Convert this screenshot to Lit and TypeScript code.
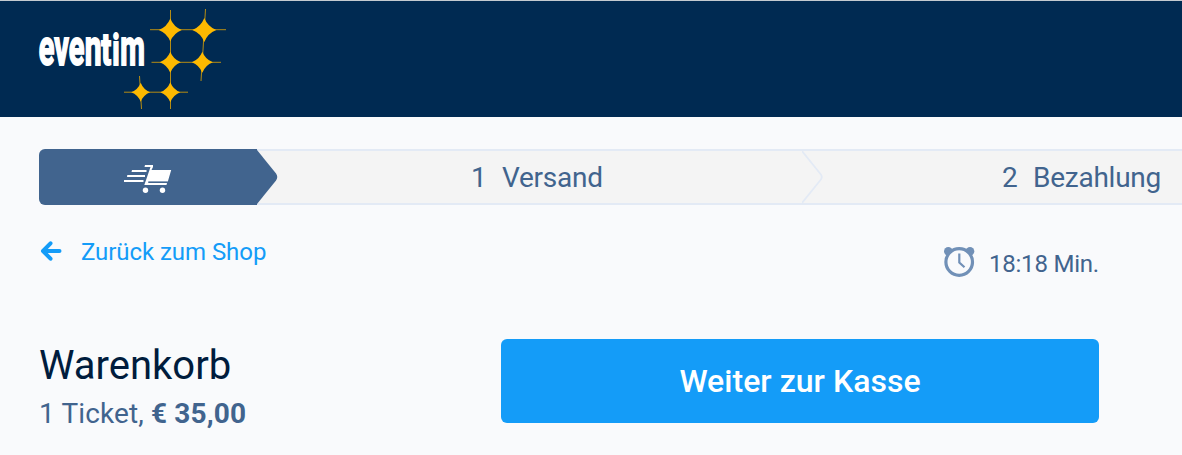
import { LitElement, html, css, svg } from "lit";
import { customElement } from "lit/decorators.js";

@customElement("brand-logo")
class BrandLogo extends LitElement {
  static styles = css`
    :host { display: block; width: 200px; height: 110px; }
    .logo { display: block; }
    .word { font-family: Roboto, sans-serif; font-weight: 700; fill: #fff; stroke: #fff; stroke-width: 1.9px; }
    .line { stroke: #b48c14; stroke-width: 1; fill: none; }
    .star { fill: #fdb900; }
  `;

  private star(x: number, y: number, r: number) {
    const k = r * 0.28;
    return svg`<path class="star" d="M${x} ${y - r}Q${x + k} ${y - k} ${x + r} ${y}Q${x + k} ${y + k} ${x} ${y + r}Q${x - k} ${y + k} ${x - r} ${y}Q${x - k} ${y - k} ${x} ${y - r}Z"/>`;
  }

  render() {
    return html`<svg class="logo" width="200" height="110" viewBox="30 1 200 110" role="img" aria-label="eventim">
      <g transform="translate(38.800 65.300) scale(.525 1)">
        <text class="word" x="0" y="0" font-size="50" textLength="87" lengthAdjust="spacingAndGlyphs">eve</text>
        <text class="word" x="87.500" y="0" font-size="50" textLength="32" lengthAdjust="spacingAndGlyphs">n</text>
        <text class="word" x="119" y="0" font-size="45" textLength="19" lengthAdjust="spacingAndGlyphs">t</text>
        <text class="word" x="140" y="0" font-size="43" textLength="14" lengthAdjust="spacingAndGlyphs">i</text>
        <text class="word" x="155" y="0" font-size="50" textLength="47" lengthAdjust="spacingAndGlyphs">m</text>
      </g>
      <path class="line" d="M150 29.7H226M151.500 62.300H221M124 92.200H188M170.500 10V109M205.500 9L203 50L201 81M139.500 76L141.500 109"/>
      ${this.star(170.3, 30, 11.5)}${this.star(204.3, 30, 12)}${this.star(170.3, 62.3, 10.5)}
      ${this.star(202.3, 62.3, 10.5)}${this.star(140.7, 92.3, 9.5)}${this.star(170.3, 92.3, 10)}
    </svg>`;
  }
}

@customElement("checkout-steps")
class CheckoutSteps extends LitElement {
  static styles = css`
    :host { display: block; font: 400 28px/58px Roboto, sans-serif; letter-spacing: -0.25px; color: #41648e; }
    .steps { display: flex; height: 56px; overflow: hidden; background: #f4f4f4; box-sizing: border-box;
      box-shadow: inset 0 2px #e3eaf5, inset 0 -2px #e3eaf5; border-radius: 6px 0 0 6px; }
    .cart { display: flex; width: 218px; flex: none; background: #41648e; align-items: center; justify-content: center; }
    .icon { margin-top: 2px; }
    .tip { flex: none; width: 21px; height: 56px; }
    .step { display: flex; flex: none; gap: 15.5px; box-sizing: border-box; white-space: pre; }
    .shipping { width: 524px; padding-left: 193px; }
    .payment { padding-left: 179px; }
  `;

  render() {
    return html`<div class="steps">
      <div class="cart">
        <svg class="icon" width="48" height="30" viewBox="124 163 48 30" fill="#fff" role="img" aria-label="Warenkorb">
          <path d="M145 165H153V167L151.500 170H171.200L168 181H149L148 183H167L166.500 185H144.300L150.500 167H144.500Z"/>
          <path d="M148.500 181.500H168" stroke="#8ba1bb" stroke-width="1"/>
          <path d="M132 170H146.500V172H131.500ZM127.300 175H145V177H127ZM124 180H143.500V182H124Z"/>
          <circle cx="145.500" cy="190.200" r="2.700"/><circle cx="162.500" cy="190.200" r="2.700"/>
        </svg>
      </div>
      <svg class="tip" viewBox="0 0 21 56" fill="#41648e"><path d="M0 1L19 24.500Q21.500 28 19 31.500L0 55Z"/></svg>
      <div class="step shipping"><span>1</span><span>Versand</span></div>
      <svg class="tip" viewBox="0 0 21 56" fill="none" stroke="#e3eaf5" stroke-width="1.8"><path d="M0 2L18.500 25Q21 28 18.500 31L0 54"/></svg>
      <div class="step payment"><span>2</span><span>Bezahlung</span></div>
    </div>`;
  }
}

@customElement("app-root")
class AppRoot extends LitElement {
  static styles = css`
    :host { display: block; height: 455px; overflow: hidden; background: #f9fafc; font-family: Roboto, sans-serif; color: #41648e; }
    .header { height: 117px; box-sizing: border-box; border-top: 1px solid #c4cad0; background: #002a52; padding-left: 30px; }
    .steps { margin: 32px 0 0 39px; }
    .nav { display: flex; justify-content: space-between; margin: 32px 83px 0 39px; height: 60px; font-size: 24px; line-height: 30px; }
    .back { display: flex; gap: 18px; height: 30px; color: #149cf8; text-decoration: none; letter-spacing: -0.06px; }
    .arrow { margin-top: 3px; }
    .timer { display: flex; gap: 14px; height: 30px; margin-top: 12px; letter-spacing: -0.2px; }
    .clock { margin-top: -3px; }
    .summary { display: flex; justify-content: space-between; margin: 42px 83px 0 39px; }
    .title { margin: 4px 0 0; font-size: 40px; line-height: 46px; font-weight: 400; color: #001c3d; }
    .total { margin: 8px 0 0; font-size: 28px; line-height: 34px; letter-spacing: 0.13px; }
    .amount { font-weight: 700; }
    .button { width: 598px; height: 84px; border: 0; padding: 0; border-radius: 6px; background: #149cf8; color: #fff; font: 500 32px/84px Roboto, sans-serif; letter-spacing: 0.03px; }
  `;

  render() {
    return html`
      <header class="header"><brand-logo></brand-logo></header>
      <checkout-steps class="steps"></checkout-steps>
      <div class="nav">
        <a class="back" href="#">
          <svg class="arrow" width="24" height="22" viewBox="39 240 24 22" fill="none" stroke="#149cf8" stroke-width="4" stroke-linecap="round" stroke-linejoin="round"><path d="M50.500 243.300L43 251L50.500 258.700M43.500 251H59.500"/></svg>
          <span>Zurück zum Shop</span>
        </a>
        <div class="timer">
          <svg class="clock" width="32" height="32" viewBox="943 246 32 32" fill="none" stroke="#7190b7"><g fill="#7190b7" stroke="none"><circle cx="948.300" cy="251.300" r="4.300"/><circle cx="970" cy="251.300" r="4.300"/></g><circle cx="959.200" cy="262" r="13.300" fill="#f9fafc" stroke-width="3.200"/><path d="M959.300 253.500V262.500L964.500 267.300" stroke-width="2.200"/></svg>
          <span>18:18 Min.</span>
        </div>
      </div>
      <main class="summary">
        <div>
          <h1 class="title">Warenkorb</h1>
          <p class="total">1 Ticket, <span class="amount">€ 35,00</span></p>
        </div>
        <button class="button">Weiter zur Kasse</button>
      </main>
    `;
  }
}
